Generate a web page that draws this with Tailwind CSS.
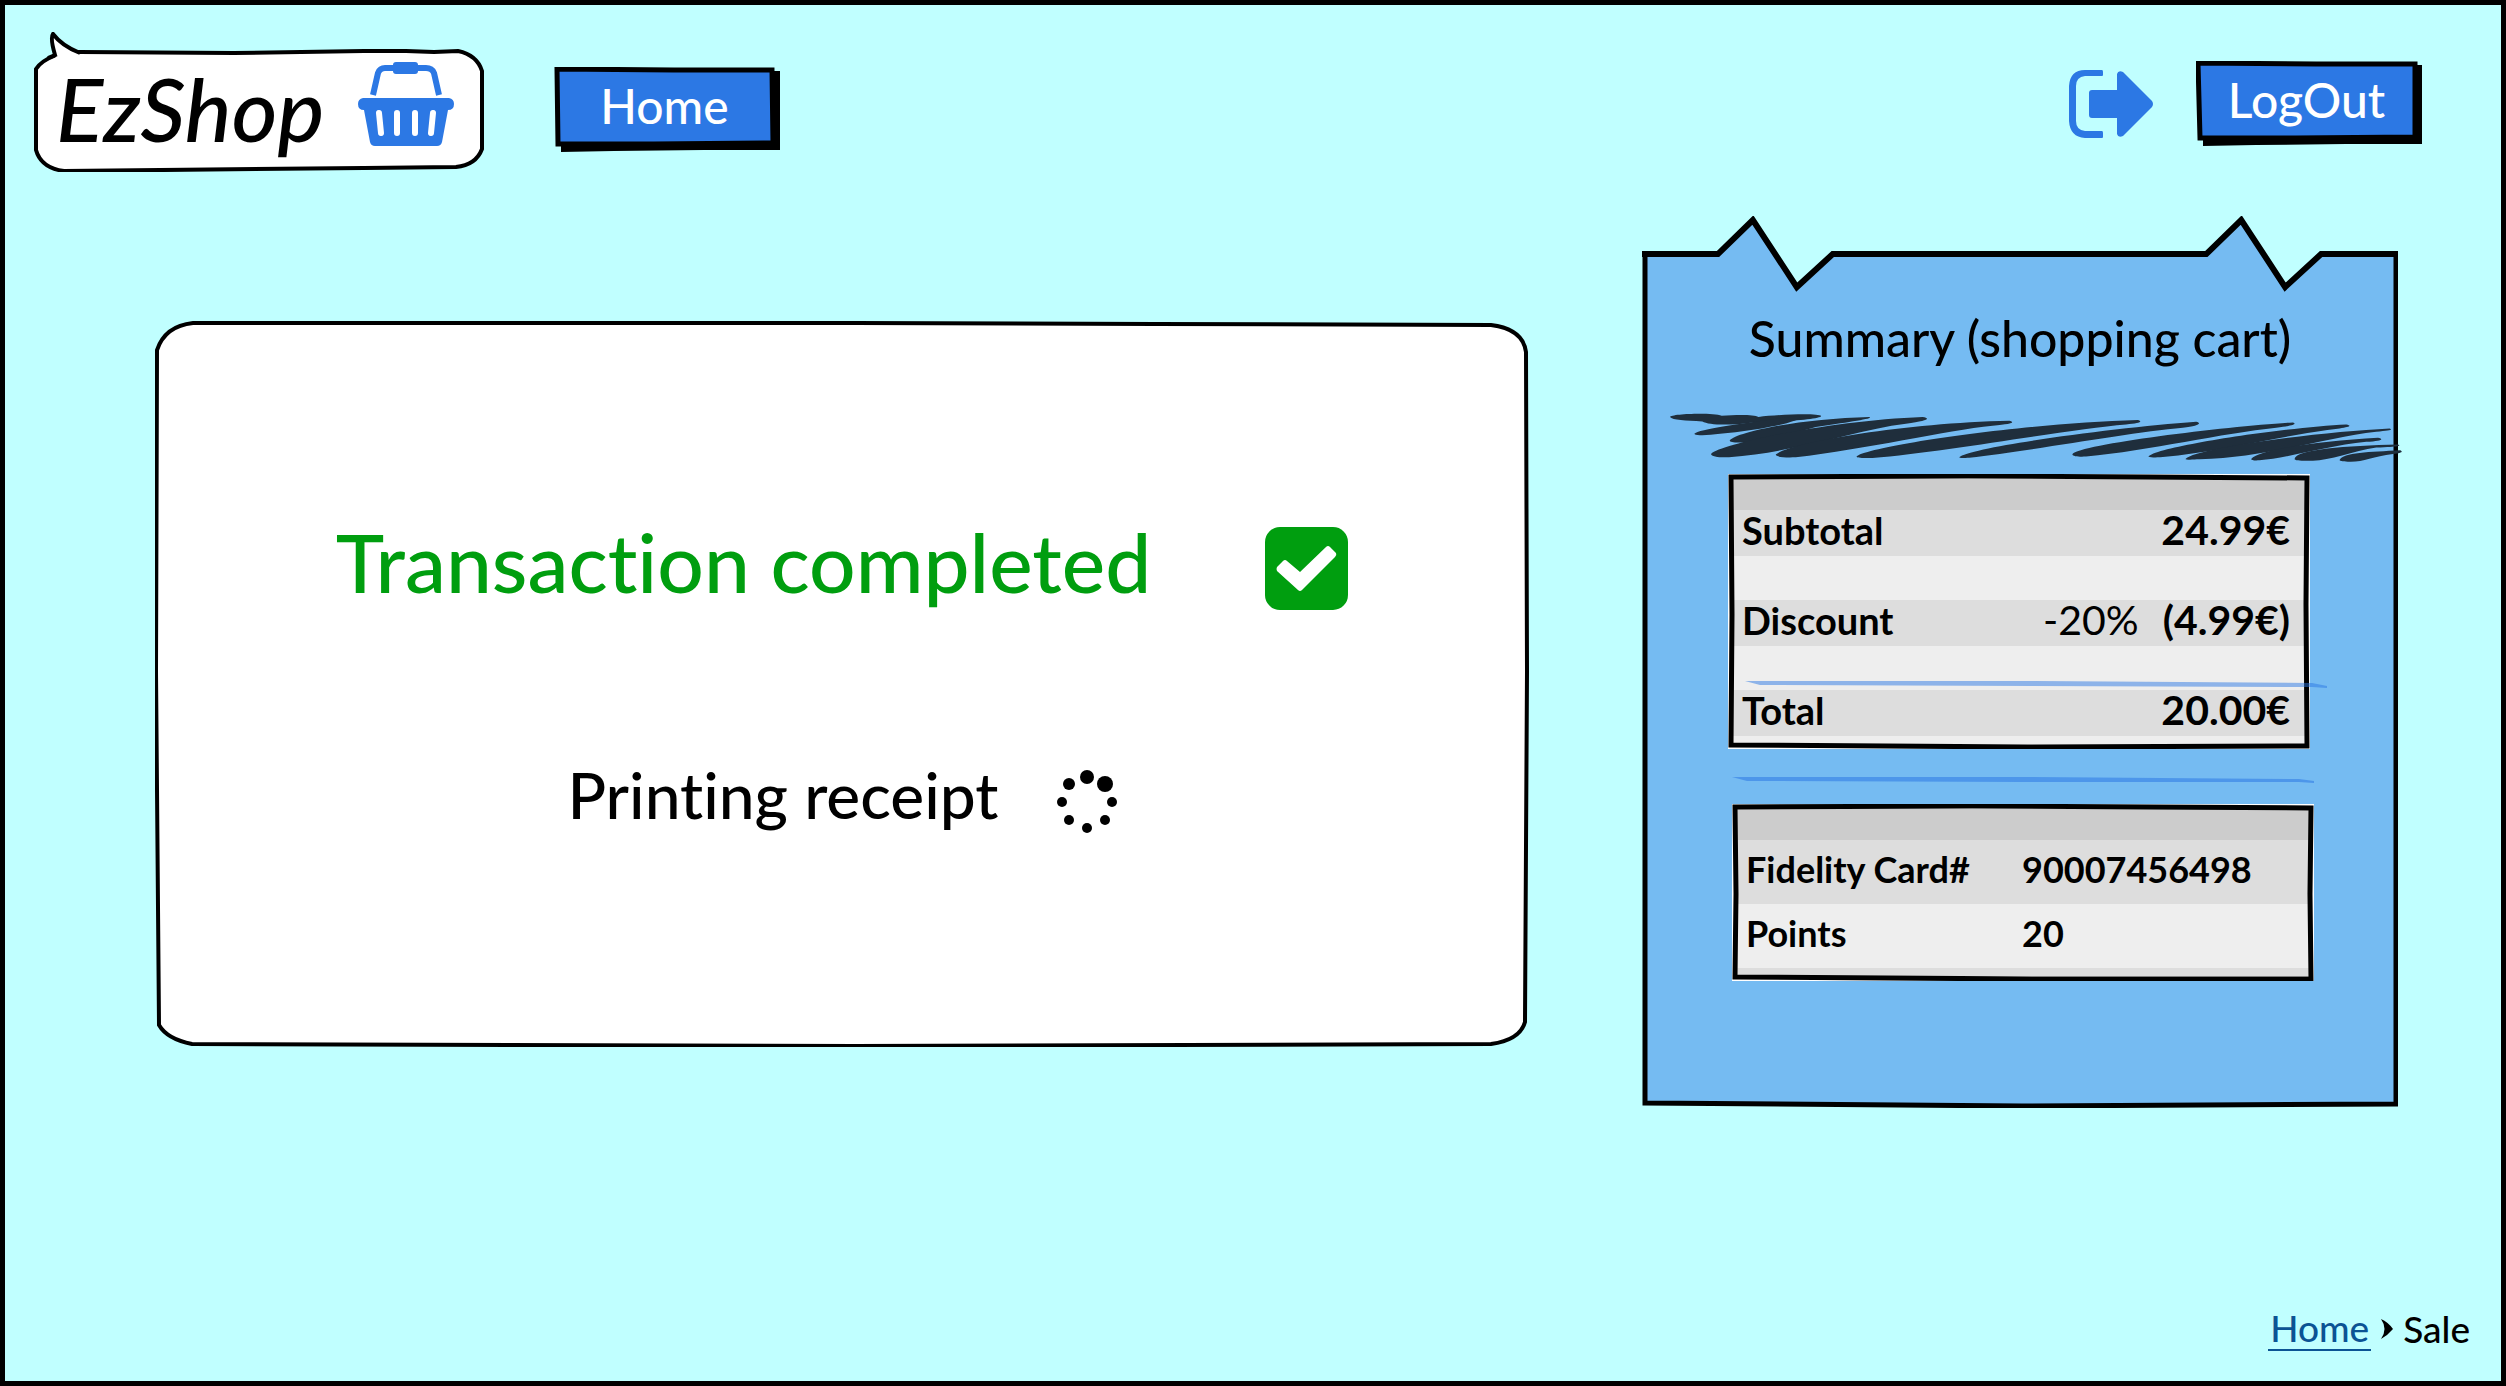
<!DOCTYPE html>
<html lang="en">
<head>
<meta charset="utf-8">
<title>EzShop - Sale</title>
<script src="https://cdn.jsdelivr.net/npm/@tailwindcss/browser@4"></script>
</head>
<body class="bg-black font-['Lato',sans-serif] font-medium text-black [font-variant-ligatures:none]">
<div class="flex min-h-screen flex-col border-5 border-black bg-[#c0ffff]">

  <header class="flex items-start pt-[27px] pr-[79px] pl-[29px]">
    <div class="relative flex h-[140px] w-[450px] items-center justify-between pt-3 pr-[30px] pl-[22px]">
      <svg class="absolute inset-0 h-full w-full" viewBox="0 0 450 140" preserveAspectRatio="none" aria-hidden="true">
        <path d="M24 20 L46 20 L200 21 L330 19 L372 19 L400 20 L424 19 Q443 23 448 39 L448 117 Q442 133 422 135 L330 136 L30 139 Q7 136 2 118 L2 37 Q7 29 20 24Z" fill="#fff" stroke="#000" stroke-width="4"/>
        <path d="M21 24 Q17 6 20 3 Q29 14 45 21 L45 25 L22 26Z" fill="#fff"/>
        <path d="M14 26 L21 23 Q16 6 19 2 Q28 14 46 21" fill="none" stroke="#000" stroke-width="4"/>
      </svg>
      <h1 class="relative text-[88px] leading-20 italic">EzShop</h1>
      <svg class="relative mb-2 h-[84px] w-24" viewBox="0 0 96 84" fill="#2c78e4" aria-hidden="true">
        <path d="M15 33 L20 11 Q22 6 27 6 H68 Q74 6 76 11 L81 33" fill="none" stroke="#2c78e4" stroke-width="6"/>
        <rect x="35" width="25" height="12" rx="3"/>
        <path fill-rule="evenodd" d="M5 36 H91 Q96 37 96 42 Q96 48 90 48 L84 80 Q83 84 79 84 H17 Q13 84 12 80 L6 48 Q0 48 0 42 Q0 37 5 36Z"/>
        <path d="M21 51 L23 71 M39 51 V71 M57 51 V71 M75 51 L73 71" stroke="#fff" stroke-width="6" stroke-linecap="round"/>
      </svg>
    </div>

    <button type="button" class="relative mt-[35px] ml-[70px] h-[85px] w-[226px] pr-[5px] pb-[7px] text-5xl text-white">
      <svg class="absolute inset-0 h-full w-full" viewBox="0 0 226 85" preserveAspectRatio="none" aria-hidden="true">
        <path d="M7 4 H226 V83 L150 83 L60 84 L7 85Z"/>
        <path d="M3 2 L120 3 L218 3 L219 76 L100 77 L4 77Z" fill="#2c78e4" stroke="#000" stroke-width="5"/>
      </svg>
      <span class="relative">Home</span>
    </button>

    <div class="mt-[29px] ml-auto flex items-center gap-[43px]">
      <svg class="h-[70px] w-[84px]" viewBox="0 0 84 70" fill="#2c78e4" aria-hidden="true">
        <path d="M33 1 Q34 1 34 3 V6 Q34 7 33 7 H16 Q7 8 7 17 V52 Q7 61 16 62 H33 Q34 62 34 64 V68 Q34 69 33 69 H16 Q1 68 0 52 V17 Q1 1 16 1Z"/>
        <path d="M23 21 H48 V5 Q49 1 54 3 L83 32 Q85 35 83 38 L54 67 Q49 69 48 65 V49 H23 Q20 49 20 46 V24 Q20 21 23 21Z"/>
      </svg>
      <button type="button" class="relative h-[85px] w-[226px] pr-[5px] pb-[7px] text-5xl text-white">
        <svg class="absolute inset-0 h-full w-full" viewBox="0 0 226 85" preserveAspectRatio="none" aria-hidden="true">
          <path d="M7 4 H226 V83 L150 83 L60 84 L7 85Z"/>
          <path d="M2 2 L120 3 L219 3 L219 76 L100 77 L4 77Z" fill="#2c78e4" stroke="#000" stroke-width="5"/>
        </svg>
        <span class="relative">LogOut</span>
      </button>
    </div>
  </header>

  <main class="mt-11 flex items-start gap-[113px] pr-[103px] pl-[150px]">
    <section class="relative mt-[105px] min-w-0 flex-1 pt-[206px] pb-[214px]">
      <svg class="absolute inset-0 h-full w-full" viewBox="0 0 1374 725" preserveAspectRatio="none" aria-hidden="true">
        <path d="M38 2 L700 2 L1000 3 L1336 4 Q1368 8 1371 31 L1372 350 L1370 700 Q1365 718 1336 722 L700 724 L37 722 Q12 717 4 703 L1 350 L2 29 Q10 5 38 2Z" fill="#fff" stroke="#000" stroke-width="4"/>
      </svg>
      <div class="relative flex items-center justify-center gap-[114px]">
        <h2 class="mb-4 text-[82px] leading-16 text-[#009e0f]">Transaction completed</h2>
        <svg class="h-[83px] w-[83px]" viewBox="0 0 83 83" aria-hidden="true">
          <rect width="83" height="83" rx="15" fill="#009e0f"/>
          <path d="M12 40 L18 34 Q20 32 22 34 L35 45 L61 20 Q63 18 65 20 L71 26 Q72 28 70 30 L37 63 Q35 65 33 63 L12 44 Q11 42 12 40Z" fill="#fff"/>
        </svg>
      </div>
      <div class="relative mt-[159px] flex items-center justify-center gap-[58px]" role="status">
        <p class="mb-3 text-[64px] leading-[52px]">Printing receipt</p>
        <svg class="h-16 w-[60px]" viewBox="0 0 60 64" aria-hidden="true">
          <circle cx="30" cy="8" r="7"/><circle cx="48" cy="15" r="8"/><circle cx="55" cy="33" r="5"/><circle cx="48" cy="51" r="5"/>
          <circle cx="30" cy="59" r="5"/><circle cx="12" cy="51" r="5"/><circle cx="5" cy="33" r="5"/><circle cx="12" cy="15" r="6"/>
        </svg>
      </div>
    </section>

    <aside class="relative w-[756px] shrink-0 pt-[92px] pb-[127px]">
      <svg class="absolute inset-0 h-full w-full" viewBox="0 0 757 891" preserveAspectRatio="none" aria-hidden="true">
        <path d="M3 38 H76 L111 4 L155 71 L191 38 H565 L600 4 L644 71 L680 38 H755 V887 L380 888 L3 886Z" fill="#75bbf2"/>
        <path d="M3 38 V886 L380 889 L755 887 V38" fill="none" stroke="#000" stroke-width="5"/>
        <path d="M0 38 H76 L111 4 L155 71 L191 38 H565 L600 4 L644 71 L680 38 H757" fill="none" stroke="#000" stroke-width="6"/>
      </svg>
      <h2 class="relative text-center text-[50px] leading-15">Summary (shopping cart)</h2>
      <svg class="relative mt-11 ml-7 h-[52px] w-[733px]" viewBox="33 35 2197 155" preserveAspectRatio="none" fill="#1f2e3c" aria-hidden="true">
        <path d="M33 50 C35 40 160 36 188 46 C230 44 285 42 298 50 C360 42 480 38 486 47 C486 58 340 66 280 66 C210 76 150 74 130 63 C80 60 40 60 33 50Z"/>
        <path d="M106 100 C120 84 300 62 420 46 C440 68 230 100 130 104 C115 105 106 103 106 100Z"/>
        <path d="M212 120 C235 92 440 54 630 50 C650 54 560 66 470 80 C400 100 300 126 240 126 C222 126 212 124 212 120Z"/>
        <path d="M156 160 C190 128 520 60 790 50 C815 54 808 60 740 70 C590 88 420 154 210 170 C180 171 156 168 156 160Z"/>
        <path d="M350 162 C380 130 720 68 1050 61 C1068 66 1060 70 1000 76 C860 90 620 146 410 170 C380 171 350 170 350 162Z"/>
        <path d="M592 168 C620 138 1090 68 1435 59 C1452 64 1440 69 1400 72 C1230 86 860 154 640 172 C610 173 592 172 592 168Z"/>
        <path d="M900 170 C930 140 1360 82 1610 64 C1630 68 1615 78 1570 82 C1410 96 1110 152 930 171 C915 172 900 173 900 170Z"/>
        <path d="M1239 161 C1260 130 1720 76 1900 66 C1912 70 1905 76 1850 82 C1690 98 1470 150 1280 168 C1260 169 1240 168 1239 161Z"/>
        <path d="M1467 168 C1490 138 1880 80 2060 72 C2078 76 2070 80 2040 84 C1900 98 1690 154 1510 169 C1485 171 1467 171 1467 168Z"/>
        <path d="M1578 175 C1610 142 1980 94 2190 84 C2202 88 2190 91 2150 94 C2000 110 1830 170 1620 176 C1600 177 1578 178 1578 175Z"/>
        <path d="M1775 175 C1800 146 1980 122 2155 112 C2175 116 2165 122 2120 124 C2000 136 1880 174 1800 179 C1785 180 1775 179 1775 175Z"/>
        <path d="M1905 175 C1910 146 2060 136 2215 132 C2225 136 2220 139 2150 141 C2080 152 2010 180 1960 180 C1930 181 1905 180 1905 175Z"/>
        <path d="M2040 178 C2050 156 2130 154 2222 149 C2232 154 2224 158 2200 160 C2140 168 2110 184 2070 183 C2055 183 2040 182 2040 178Z"/>
      </svg>

      <div class="relative mt-2.5 ml-[86px] w-[582px] bg-white p-[5px]">
        <table class="w-full table-fixed text-[38px] leading-9 font-bold">
          <thead><tr class="h-[31px] bg-[#ccc]"><td colspan="2"></td></tr></thead>
          <tbody>
            <tr class="h-[46px] bg-[#ddd]"><th scope="row" class="w-1/3 pb-1.5 pl-[9px] text-left align-middle">Subtotal</th><td class="pr-[15px] pb-1.5 text-right align-middle text-[41px]">24.99€</td></tr>
            <tr class="h-11 bg-[#eee]"><td colspan="2"></td></tr>
            <tr class="h-[46px] bg-[#ddd]"><th scope="row" class="pb-1.5 pl-[9px] text-left align-middle">Discount</th><td class="pr-[15px] pb-1.5 text-right align-middle text-[41px]"><span class="mr-6 font-normal">-20%</span>(4.99€)</td></tr>
            <tr class="h-11 bg-[#eee]"><td colspan="2"></td></tr>
            <tr class="h-[46px] bg-[#ddd]"><th scope="row" class="pb-1.5 pl-[9px] text-left align-middle">Total</th><td class="pr-[15px] pb-1.5 text-right align-middle text-[41px]">20.00€</td></tr>
            <tr class="h-2 bg-[#eee]"><td colspan="2"></td></tr>
          </tbody>
        </table>
        <svg class="absolute inset-0 h-full w-full" viewBox="0 0 582 275" preserveAspectRatio="none" fill="none" stroke="#000" stroke-width="5" aria-hidden="true">
          <path d="M3 3 L240 2 L420 3 L579 4 L578 130 L579 272 L300 273 L3 271 L4 140Z"/>
        </svg>
        <svg class="absolute top-[206px] left-[17px] h-2 w-[582px]" viewBox="0 0 582 8" preserveAspectRatio="none" fill="#2c78e4" fill-opacity=".5" aria-hidden="true">
          <path d="M0 1 L15 1 L290 1 L567 3 L582 6 V8 L567 7 L290 6 L15 5Z"/>
        </svg>
      </div>

      <svg class="relative mt-7 ml-[90px] h-1.5 w-[582px]" viewBox="0 0 582 6" preserveAspectRatio="none" fill="#2c78e4" fill-opacity=".55" aria-hidden="true">
        <path d="M0 0 L15 0 L290 0 L567 2 L582 4 V6 L567 5 L290 5 L15 4Z"/>
      </svg>

      <div class="relative mt-[21px] ml-[90px] w-[582px] bg-white p-[5px]">
        <table class="w-full table-fixed text-4xl leading-none font-bold">
          <thead><tr class="h-[31px] bg-[#ccc]"><td class="w-[276px]"></td><td></td></tr></thead>
          <tbody>
            <tr class="h-16 bg-[#ddd]"><th scope="row" class="pb-1.5 pl-[9px] text-left align-middle">Fidelity Card#</th><td class="pb-1.5 pl-[9px] align-middle">90007456498</td></tr>
            <tr class="h-16 bg-[#eee]"><th scope="row" class="pb-1.5 pl-[9px] text-left align-middle">Points</th><td class="pb-1.5 pl-[9px] align-middle">20</td></tr>
            <tr class="h-2 bg-[#ddd]"><td colspan="2"></td></tr>
          </tbody>
        </table>
        <svg class="absolute inset-0 h-full w-full" viewBox="0 0 582 177" preserveAspectRatio="none" fill="none" stroke="#000" stroke-width="5" aria-hidden="true">
          <path d="M3 3 L240 2 L420 3 L579 4 L578 90 L579 175 L300 175 L3 173 L4 90Z"/>
        </svg>
      </div>
    </aside>
  </main>

  <nav class="mt-auto flex items-center justify-end pr-[31px] pb-[30px] text-[37px] leading-11" aria-label="Breadcrumb">
    <a href="#" class="border-b-2 border-[#0b5394] px-0.5 leading-[42px] text-[#0b5394]">Home</a>
    <svg class="mx-2.5 h-5 w-3" viewBox="0 0 12 20" aria-hidden="true"><path d="M0 0 Q7 3 12 10 Q7 16 0 20 Q7 10 0 0Z"/></svg>
    <span>Sale</span>
  </nav>
</div>
</body>
</html>
